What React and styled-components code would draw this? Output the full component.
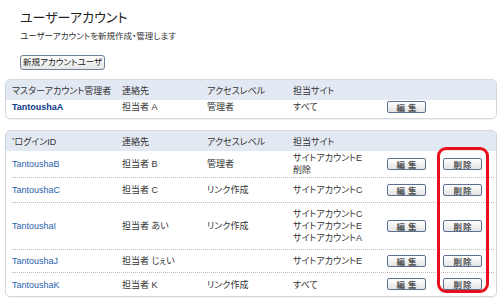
import React from "react";
import styled, { createGlobalStyle } from "styled-components";

const GlobalStyle = createGlobalStyle`
    html, body {
        margin: 0;
        padding: 0;
        background: #ffffff;
    }
    body {
        font-family: "Liberation Sans", "Noto Sans CJK JP", sans-serif;
        color: #333333;
        font-feature-settings: "palt";
    }
`;

const Page = styled.div`
    width: 500px;
    height: 300px;
    padding: 9px 3px 0 5px;
    box-sizing: border-box;
    overflow: hidden;
`;

const Intro = styled.div`
    padding-left: 15px;
    display: flex;
    flex-direction: column;
    align-items: flex-start;
`;

const Title = styled.h1`
    margin: 0;
    font-size: 13px;
    font-weight: normal;
    line-height: 17px;
    color: #222;
`;

const Description = styled.p`
    margin: 5px 0 0;
    font-size: 8.5px;
    line-height: 11px;
`;

const NewButton = styled.button`
    margin-top: 13px;
    height: 15px;
    padding: 0 2px;
    font-family: inherit;
    font-feature-settings: "palt";
    font-size: 8.5px;
    line-height: 11px;
    color: #222;
    border: 1px solid #6f7f96;
    border-radius: 3px;
    background: linear-gradient(#ffffff, #e6e6e6);
`;

const Panel = styled.div`
    position: relative;
    margin-top: ${(p) => p.$top}px;
    border: 1px solid #d3d8e0;
    border-radius: 5px;
    box-shadow: 0 1px 1px rgba(0, 0, 0, 0.06);
`;

const cols = "110px 85px 86px 94px 56px 1fr";

const HeaderRow = styled.div`
    display: grid;
    grid-template-columns: ${cols};
    align-items: center;
    height: 20px;
    padding-left: 6px;
    background: #e3e9f3;
    border-radius: 4px 4px 0 0;
    font-size: 9px;
    color: #333;
`;

const Mark = styled.span`
    font-size: 6px;
    vertical-align: 3px;
`;

const Row = styled.div`
    display: grid;
    grid-template-columns: ${cols};
    align-items: center;
    height: ${(p) => p.$h}px;
    margin: 0 2px 0 6px;
    border-top: ${(p) => (p.$first ? "none" : "1px dotted #bdbdbd")};
    font-size: 9px;
    line-height: 12px;
`;

const Name = styled.span`
    font-family: "Liberation Sans", sans-serif;
    color: ${(p) => (p.$master ? "#0b3a8a" : "#2a62ae")};
    font-weight: ${(p) => (p.$master ? "bold" : "normal")};
`;

const Cell = styled.span`
    display: flex;
    flex-direction: column;
    color: #333;
`;

const SmallButton = styled.button`
    width: 39px;
    height: 12px;
    padding: 0;
    font-family: "Noto Sans CJK JP", sans-serif;
    font-size: 8.5px;
    line-height: 10px;
    font-weight: bold;
    letter-spacing: ${(p) => (p.$wide ? "3px" : "1px")};
    text-indent: ${(p) => (p.$wide ? "3px" : "1px")};
    color: #555;
    border: 1px solid #5b7092;
    border-radius: 2px;
    background: linear-gradient(#ffffff, #e4e4e4);
`;

const Spacer = styled.div`
    height: ${(p) => p.$h}px;
`;

const Highlight = styled.div`
    position: absolute;
    left: 431px;
    top: 16px;
    width: 52px;
    height: 146px;
    box-sizing: border-box;
    border: 3px solid #e8101e;
    border-radius: 9px;
    pointer-events: none;
`;

const accounts = [
    { id: "TantoushaB", contact: "担当者 B", level: "管理者", sites: ["サイトアカウントE", "削除"], h: 26 },
    { id: "TantoushaC", contact: "担当者 C", level: "リンク作成", sites: ["サイトアカウントC"], h: 24 },
    { id: "TantoushaI", contact: "担当者 あい", level: "リンク作成", sites: ["サイトアカウントC", "サイトアカウントE", "サイトアカウントA"], h: 46 },
    { id: "TantoushaJ", contact: "担当者 じぇい", level: "", sites: ["サイトアカウントE"], h: 22 },
    { id: "TantoushaK", contact: "担当者 K", level: "リンク作成", sites: ["すべて"], h: 23 },
];

export default function App() {
    return (
        <>
            <GlobalStyle />
            <Page>
                <Intro>
                    <Title>ユーザーアカウント</Title>
                    <Description>ユーザーアカウントを新規作成・管理します</Description>
                    <NewButton>新規アカウントユーザ</NewButton>
                </Intro>

                <Panel $top={9}>
                    <HeaderRow>
                        <span>マスターアカウント管理者</span>
                        <span>連絡先</span>
                        <span>アクセスレベル</span>
                        <span>担当サイト</span>
                    </HeaderRow>
                    <Row $first $h={14}>
                        <Name $master>TantoushaA</Name>
                        <Cell>担当者 A</Cell>
                        <Cell>管理者</Cell>
                        <Cell>すべて</Cell>
                        <span><SmallButton $wide>編集</SmallButton></span>
                    </Row>
                    <Spacer $h={4} />
                </Panel>

                <Panel $top={11}>
                    <HeaderRow>
                        <span><Mark>*</Mark>ログインID</span>
                        <span>連絡先</span>
                        <span>アクセスレベル</span>
                        <span>担当サイト</span>
                    </HeaderRow>
                    {accounts.map((a, i) => (
                        <Row key={a.id} $first={i === 0} $h={a.h}>
                            <Name>{a.id}</Name>
                            <Cell>{a.contact}</Cell>
                            <Cell>{a.level}</Cell>
                            <Cell>
                                {a.sites.map((s) => (
                                    <span key={s}>{s}</span>
                                ))}
                            </Cell>
                            <span><SmallButton $wide>編集</SmallButton></span>
                            <span><SmallButton>削除</SmallButton></span>
                        </Row>
                    ))}
                    <Highlight />
                </Panel>
            </Page>
        </>
    );
}
